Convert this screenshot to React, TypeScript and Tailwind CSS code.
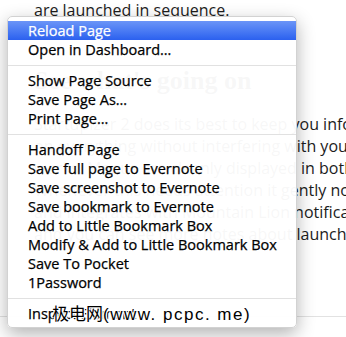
import React from "react";

const groups: string[][] = [
  ["Reload Page", "Open in Dashboard…"],
  ["Show Page Source", "Save Page As…", "Print Page…"],
  [
    "Handoff Page",
    "Save full page to Evernote",
    "Save screenshot to Evernote",
    "Save bookmark to Evernote",
    "Add to Little Bookmark Box",
    "Modify & Add to Little Bookmark Box",
    "Save To Pocket",
    "1Password",
  ],
  ["Inspect Element"],
];

const paraLines = [
  "Startupizer 2 does its best to keep you informed",
  "on everything without interfering with your",
  "works. Menus are cleanly displayed in both",
  "Whenever this needs attention it gently notifies",
  "and integrates with Mountain Lion notifications",
  "and you can see more notes about launched items",
];

export default function App() {
  return (
    <div
      className="relative w-[346px] h-[337px] overflow-hidden bg-white text-[#1c1c1c]"
      style={{ fontFamily: '"Open Sans", sans-serif' }}
    >
      {/* page content */}
      <div className="pl-[34px]">
        <div className="text-[16px] leading-[22px] whitespace-nowrap -mt-[1px]">
          are launched in sequence.
        </div>
        <div
          className="mt-[44px] text-[26px] leading-[32px] font-bold whitespace-nowrap"
          style={{ fontFamily: '"Liberation Serif", serif' }}
        >
          See what's going on
        </div>
        <div className="mt-[16px] text-[16px] leading-[22px] whitespace-nowrap">
          {paraLines.map((l, i) => (
            <div key={i}>{l}</div>
          ))}
        </div>
      </div>
      <div className="mt-[71px] h-px bg-[#e2e2e2]" />

      {/* context menu */}
      <div
        className="absolute left-[7px] top-[16px] w-[290px] rounded-[5px] border border-[#d2d2d2] bg-white/[0.965] py-[4px] shadow-[0_6px_18px_rgba(0,0,0,0.3)] text-black"
        style={{ fontFamily: '"Open Sans", sans-serif' }}
      >
        {groups.map((g, gi) => (
          <div key={gi}>
            {gi > 0 && (
              <div className="h-[12px] flex items-center">
                <div className="h-px w-full bg-[#e1e1e1]" />
              </div>
            )}
            {g.map((item) => {
              const active = item === "Reload Page";
              return (
                <div
                  key={item}
                  className={
                    "relative h-[19px] pl-[20px] text-[14.5px] leading-[19px] whitespace-nowrap [-webkit-text-stroke:0.25px_currentColor] " +
                    (active
                      ? "bg-gradient-to-b from-[#6b94f7] to-[#2b60ef] text-white"
                      : "")
                  }
                >
                  {item}
                  {item === "Inspect Element" && (
                    <span
                      className="absolute left-[44px] top-[-3px] text-[17px] leading-[24px] text-black [-webkit-text-stroke:0px] [text-shadow:0_0_1px_#fff,1px_1px_0_#fff,-1px_-1px_0_#fff,1px_-1px_0_#fff,-1px_1px_0_#fff]"
                      style={{ fontFamily: '"Noto Sans CJK SC", sans-serif' }}
                    >
                      极电网
                      <span
                        className="tracking-[1.5px]"
                        style={{ fontFamily: '"Liberation Sans", sans-serif' }}
                      >
                        (www. pcpc. me)
                      </span>
                    </span>
                  )}
                </div>
              );
            })}
          </div>
        ))}
      </div>
    </div>
  );
}
